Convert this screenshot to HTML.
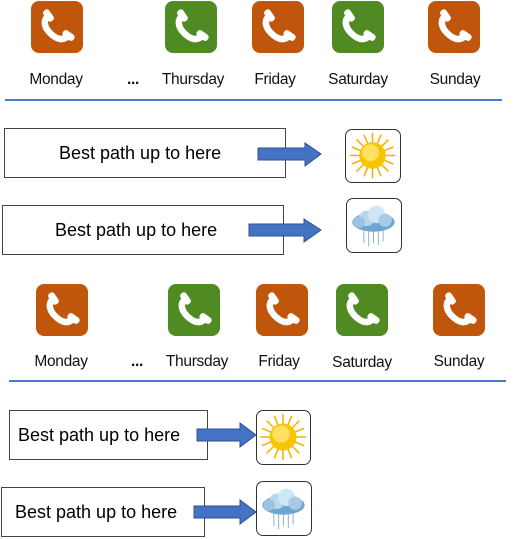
<!DOCTYPE html>
<html><head><meta charset="utf-8"><style>
body{margin:0;width:516px;height:539px;background:#fff;position:relative;overflow:hidden;font-family:"Liberation Sans",sans-serif}
.a{position:absolute}
.lbl{position:absolute;font-size:15.5px;color:#111;transform:translateX(-50%);white-space:nowrap;letter-spacing:-0.3px}
.box{position:absolute;border:1px solid #444;background:#fff;box-sizing:border-box;display:flex;align-items:center;font-family:"Liberation Sans",sans-serif;font-size:18px;color:#000}
.w{position:absolute;border:1.5px solid #333;border-radius:7px;box-sizing:border-box;background:#fff}
.hr{position:absolute;height:1.5px;background:#4a7ad0}
</style></head><body>
<svg width="0" height="0" style="position:absolute">
<symbol id="ph" viewBox="0 0 52 52"><path d="M17 15C12 19 13 26 19 32C25 38 31 40 36 36" fill="none" stroke="#fff" stroke-width="6.5" stroke-linecap="round"/><rect x="14" y="8" width="7" height="13" rx="3" transform="rotate(-35 17.5 14.5)" fill="#fff"/><rect x="31" y="31" width="13" height="7" rx="3" transform="rotate(35 37.5 34.5)" fill="#fff"/></symbol>
<symbol id="sun" viewBox="0 0 54 54"><g stroke="#f5b000" stroke-width="1.6"><path d="M27 3v48M3 27h48M10 10l34 34M44 10L10 44M18 5l18 44M36 5L18 49M5 18l44 18M5 36l44-18"/></g><circle cx="27" cy="27" r="14" fill="#f7c400"/><circle cx="25" cy="24" r="9" fill="#ffe060"/></symbol>
<symbol id="cl" viewBox="0 0 54 54"><g stroke="#8ab0cc" stroke-width="1"><path d="M17 30v16M22 31v18M27 31v15M32 31v17M37 31v13"/></g><ellipse cx="27" cy="24" rx="22" ry="10" fill="#6fa6cf"/><circle cx="20" cy="20" r="8" fill="#b9d8ee"/><circle cx="30" cy="16" r="9" fill="#cfe6f5"/><circle cx="39" cy="22" r="7" fill="#a7cbe6"/><circle cx="12" cy="24" r="6" fill="#9cc4e2"/></symbol>
</svg>

<div class="a" style="left:31px;top:1px;width:52px;height:52px;background:#c0560c;border-radius:8px"><svg width="52" height="52"><use href="#ph"/></svg></div>
<div class="a" style="left:165px;top:1px;width:52px;height:52px;background:#4f8a23;border-radius:8px"><svg width="52" height="52"><use href="#ph"/></svg></div>
<div class="a" style="left:252px;top:1px;width:52px;height:52px;background:#c0560c;border-radius:8px"><svg width="52" height="52"><use href="#ph"/></svg></div>
<div class="a" style="left:332px;top:1px;width:52px;height:52px;background:#4f8a23;border-radius:8px"><svg width="52" height="52"><use href="#ph"/></svg></div>
<div class="a" style="left:428px;top:1px;width:52px;height:52px;background:#c0560c;border-radius:8px"><svg width="52" height="52"><use href="#ph"/></svg></div>
<div class="lbl" style="left:56px;top:71px">Monday</div>
<div class="lbl" style="left:133px;top:71px;font-weight:bold">...</div>
<div class="lbl" style="left:193px;top:71px">Thursday</div>
<div class="lbl" style="left:275px;top:71px">Friday</div>
<div class="lbl" style="left:358px;top:71px">Saturday</div>
<div class="lbl" style="left:455px;top:71px">Sunday</div>
<div class="hr" style="left:5px;top:99px;width:497px"></div>

<div class="box" style="left:4px;top:128px;width:282px;height:50px;padding-left:54px">Best path up to here</div>
<svg class="a" style="left:257px;top:142px" width="66" height="25"><polygon points="1,6 48,6 48,1 64,12 48,24 48,18 1,18" fill="#4472c4" stroke="#2f528f"/></svg>
<div class="w" style="left:345px;top:129px;width:56px;height:54px"><svg width="53" height="51"><use href="#sun"/></svg></div>
<div class="box" style="left:2px;top:205px;width:282px;height:50px;padding-left:52px">Best path up to here</div>
<svg class="a" style="left:248px;top:218px" width="75" height="25"><polygon points="1,6 56,6 56,1 73,12 56,24 56,18 1,18" fill="#4472c4" stroke="#2f528f"/></svg>
<div class="w" style="left:346px;top:198px;width:56px;height:55px"><svg width="53" height="52"><use href="#cl"/></svg></div>

<div class="a" style="left:36px;top:284px;width:52px;height:52px;background:#c0560c;border-radius:8px"><svg width="52" height="52"><use href="#ph"/></svg></div>
<div class="a" style="left:168px;top:284px;width:52px;height:52px;background:#4f8a23;border-radius:8px"><svg width="52" height="52"><use href="#ph"/></svg></div>
<div class="a" style="left:256px;top:284px;width:52px;height:52px;background:#c0560c;border-radius:8px"><svg width="52" height="52"><use href="#ph"/></svg></div>
<div class="a" style="left:336px;top:284px;width:52px;height:52px;background:#4f8a23;border-radius:8px"><svg width="52" height="52"><use href="#ph"/></svg></div>
<div class="a" style="left:433px;top:284px;width:52px;height:52px;background:#c0560c;border-radius:8px"><svg width="52" height="52"><use href="#ph"/></svg></div>
<div class="lbl" style="left:61px;top:353px">Monday</div>
<div class="lbl" style="left:137px;top:353px;font-weight:bold">...</div>
<div class="lbl" style="left:197px;top:353px">Thursday</div>
<div class="lbl" style="left:279px;top:353px">Friday</div>
<div class="lbl" style="left:362px;top:354px">Saturday</div>
<div class="lbl" style="left:459px;top:353px">Sunday</div>
<div class="hr" style="left:9px;top:380px;width:497px"></div>

<div class="box" style="left:9px;top:410px;width:199px;height:50px;padding-left:8px">Best path up to here</div>
<svg class="a" style="left:196px;top:422px" width="62" height="27"><polygon points="1,7 44,7 44,1 60,13 44,25 44,19 1,19" fill="#4472c4" stroke="#2f528f"/></svg>
<div class="w" style="left:256px;top:410px;width:55px;height:55px"><svg width="52" height="52"><use href="#sun"/></svg></div>
<div class="box" style="left:1px;top:487px;width:204px;height:50px;padding-left:13px">Best path up to here</div>
<svg class="a" style="left:193px;top:499px" width="65" height="27"><polygon points="1,7 47,7 47,1 63,13 47,25 47,19 1,19" fill="#4472c4" stroke="#2f528f"/></svg>
<div class="w" style="left:256px;top:481px;width:56px;height:55px"><svg width="53" height="52"><use href="#cl"/></svg></div>
</body></html>
